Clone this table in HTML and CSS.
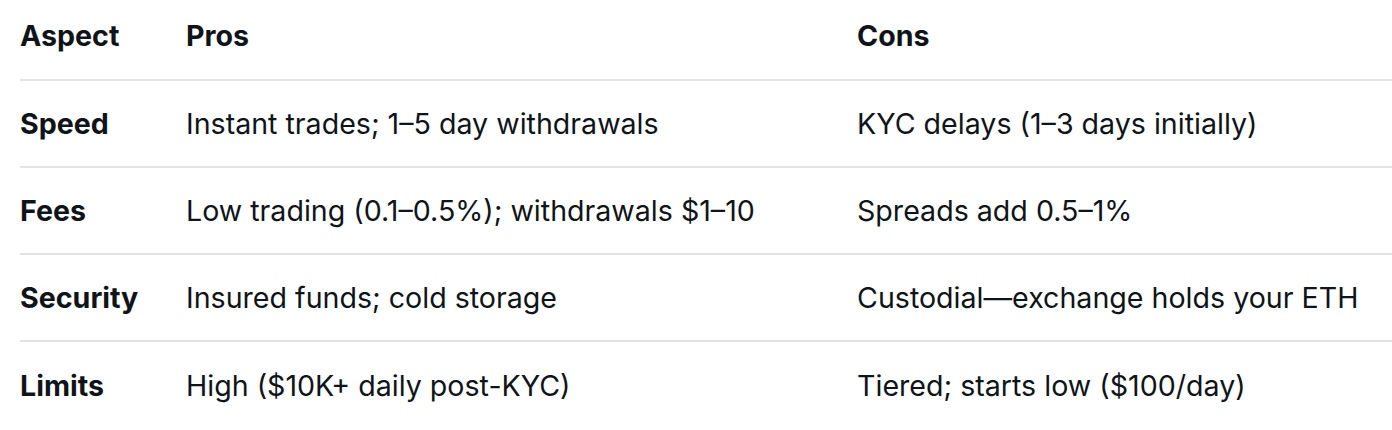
FILE: index.html
```html
<!DOCTYPE html>
<html>
<head>
<meta charset="utf-8">
<link rel="stylesheet" href="styles.css">
</head>
<body>
<table class="cmp">
  <thead>
    <tr>
      <th class="c-aspect">Aspect</th>
      <th class="c-pros">Pros</th>
      <th class="c-cons">Cons</th>
    </tr>
  </thead>
  <tbody>
    <tr>
      <td class="label">Speed</td>
      <td>Instant trades; 1–5 day withdrawals</td>
      <td>KYC delays (1–3 days initially)</td>
    </tr>
    <tr>
      <td class="label">Fees</td>
      <td>Low trading (0.1–0.5%); withdrawals $1–10</td>
      <td>Spreads add 0.5–1%</td>
    </tr>
    <tr>
      <td class="label">Security</td>
      <td>Insured funds; cold storage</td>
      <td>Custodial—exchange holds your ETH</td>
    </tr>
    <tr>
      <td class="label">Limits</td>
      <td>High ($10K+ daily post-KYC)</td>
      <td>Tiered; starts low ($100/day)</td>
    </tr>
  </tbody>
</table>
</body>
</html>
```
FILE: styles.css
```css
html, body {
  margin: 0;
  padding: 0;
  background: #ffffff;
}
body {
  padding-left: 20px;
  font-family: Inter, "Noto Sans", sans-serif;
  color: #0f1419;
  font-size: 28.6px;
}
.cmp {
  border-collapse: collapse;
  width: 1372px;
  table-layout: fixed;
}
.c-aspect { width: 166px; }
.c-pros { width: 671px; }
.cmp th {
  text-align: left;
  font-weight: 700;
  height: 80px;
  padding: 0 0 8px 0;
  vertical-align: middle;
  border-bottom: 2px solid #e1e3e5;
  box-sizing: border-box;
}
.cmp td {
  height: 87px;
  padding: 0;
  vertical-align: middle;
  font-weight: 400;
  white-space: nowrap;
  box-sizing: border-box;
}
.cmp tbody tr + tr td {
  border-top: 2px solid #e1e3e5;
}
.cmp td.label {
  font-weight: 700;
}
```
